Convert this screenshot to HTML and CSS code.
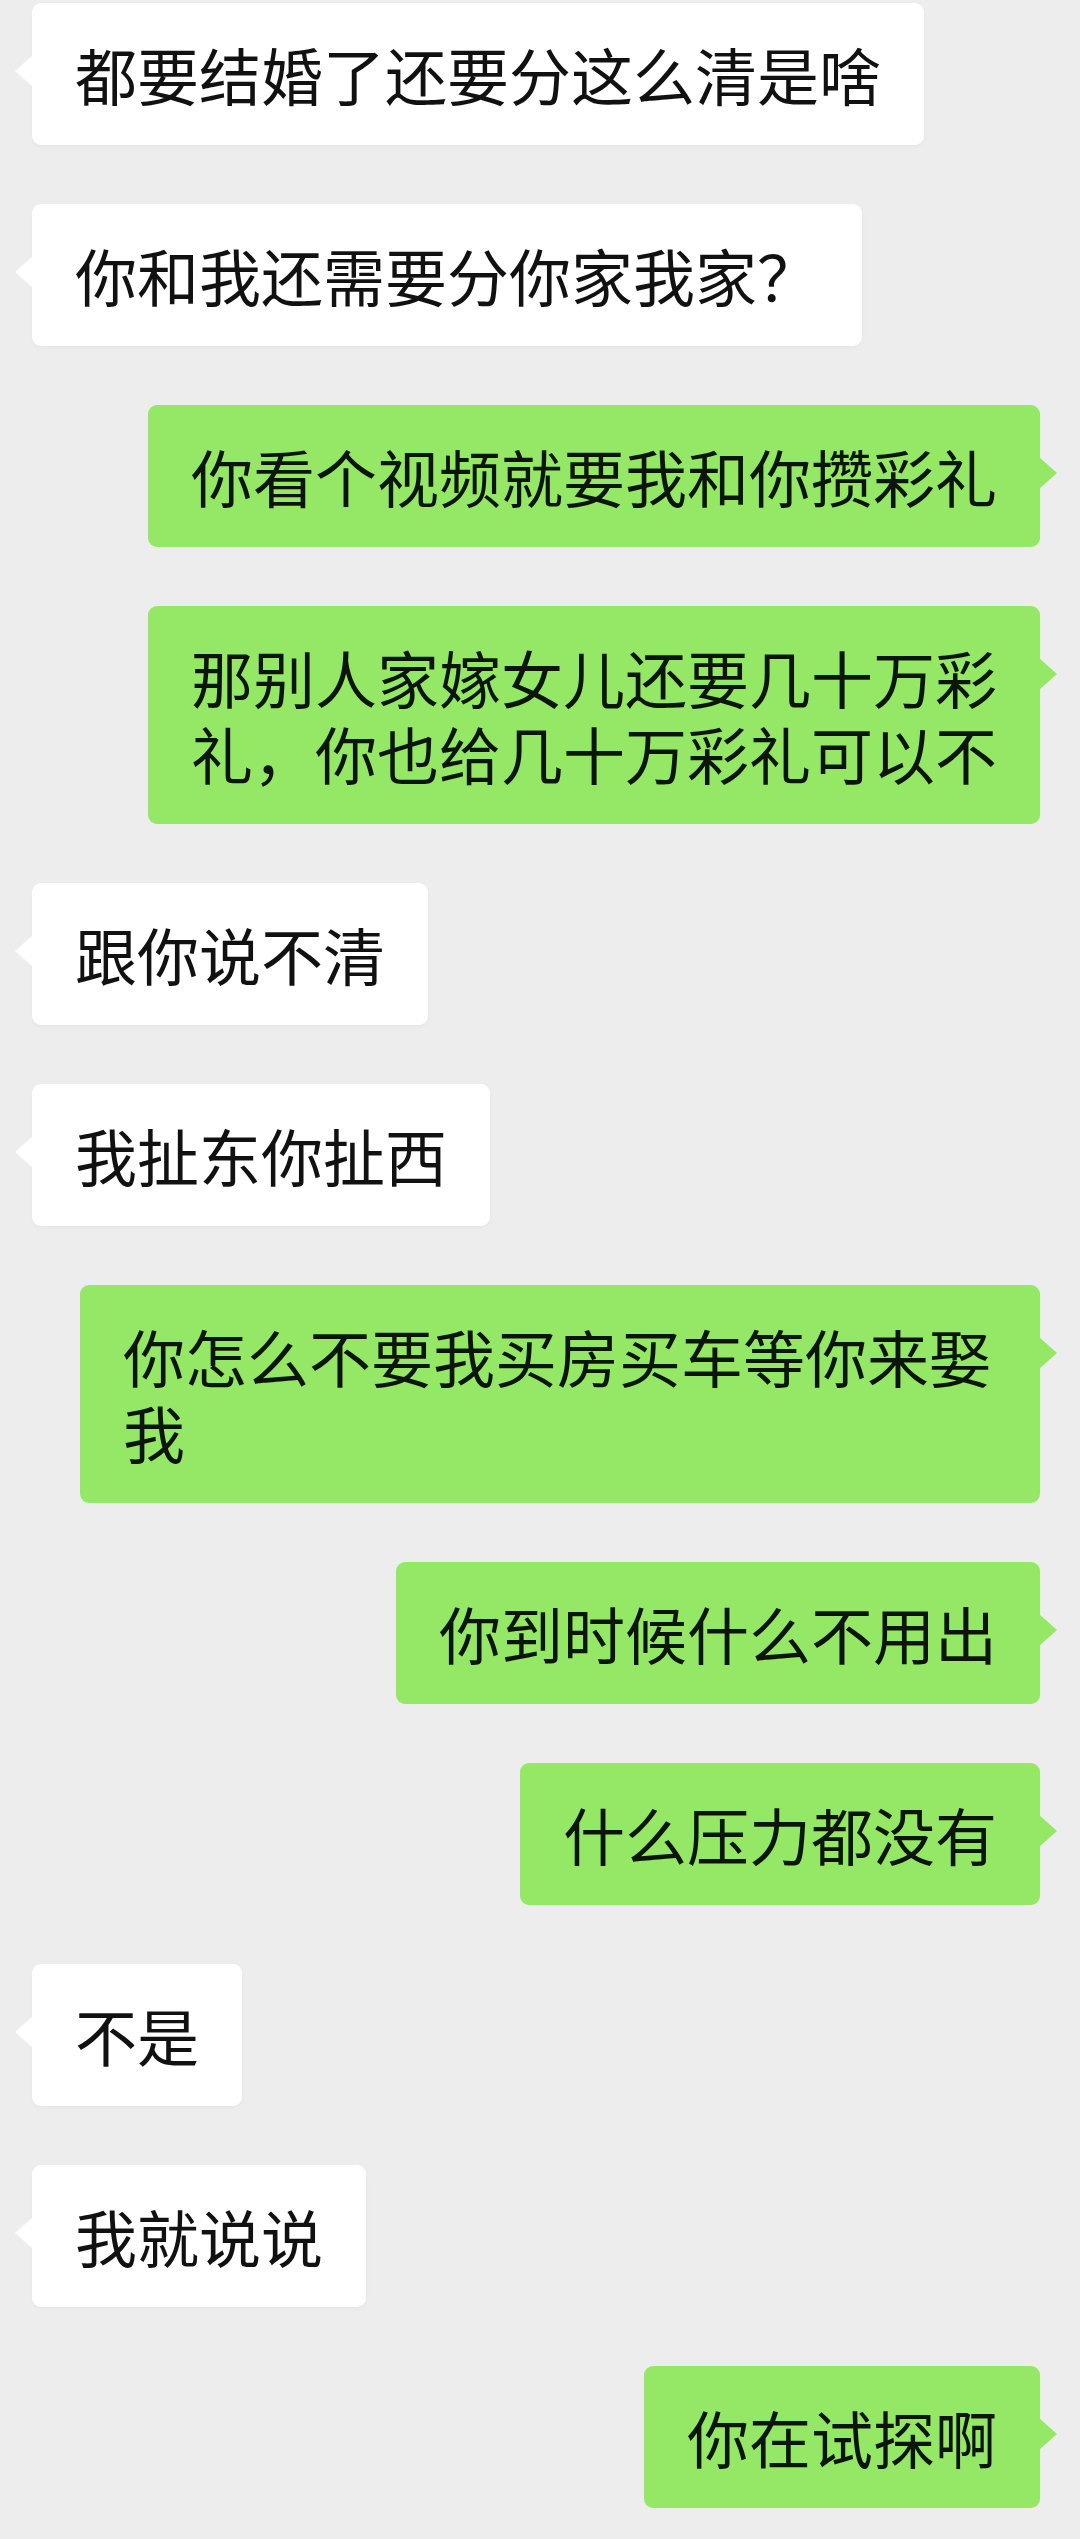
FILE: index.html
```html
<!DOCTYPE html>
<html lang="zh-CN">
<head>
    <meta charset="UTF-8">
    <meta name="viewport" content="width=device-width, initial-scale=1.0">
    <title>聊天记录</title>
    <link rel="stylesheet" href="styles.css">
</head>
<body>

<div class="chat">
    <div class="msg them">都要结婚了还要分这么清是啥</div>
    <div class="msg them">你和我还需要分你家我家？</div>
    <div class="msg me">你看个视频就要我和你攒彩礼</div>
    <div class="msg me">那别人家嫁女儿还要几十万彩<br>礼，你也给几十万彩礼可以不</div>
    <div class="msg them">跟你说不清</div>
    <div class="msg them">我扯东你扯西</div>
    <div class="msg me">你怎么不要我买房买车等你来娶我</div>
    <div class="msg me">你到时候什么不用出</div>
    <div class="msg me">什么压力都没有</div>
    <div class="msg them">不是</div>
    <div class="msg them">我就说说</div>
    <div class="msg me">你在试探啊</div>
</div>

</body>
</html>
```

FILE: styles.css
```css
body {
    margin: 0;
    background-color: #ededed;
    font-family: "Noto Sans CJK SC", "Noto Sans", sans-serif;
    color: #111;
}
.chat {
    display: flex;
    flex-direction: column;
    gap: 59px;
    padding: 3px 40px 28px 32px;
    min-height: 2508px;
}
.msg {
    position: relative;
    max-width: 960px;
    box-sizing: border-box;
    padding: 33px 43px;
    font-size: 62px;
    line-height: 76px;
    border-radius: 9px;
}
.msg::before {
    content: "";
    position: absolute;
    top: 52px;
    width: 18px;
    height: 32px;
}
.them {
    align-self: flex-start;
    background-color: #fff;
    box-shadow: 0 2px 4px rgba(0, 0, 0, 0.03);
}
.them::before {
    left: -17px;
    background-color: #fff;
    clip-path: polygon(100% 0, 0 50%, 100% 100%);
}
.me {
    align-self: flex-end;
    background-color: #95e866;
    color: #0b150a;
}
.me::before {
    right: -17px;
    background-color: #95e866;
    clip-path: polygon(0 0, 100% 50%, 0 100%);
}
```
